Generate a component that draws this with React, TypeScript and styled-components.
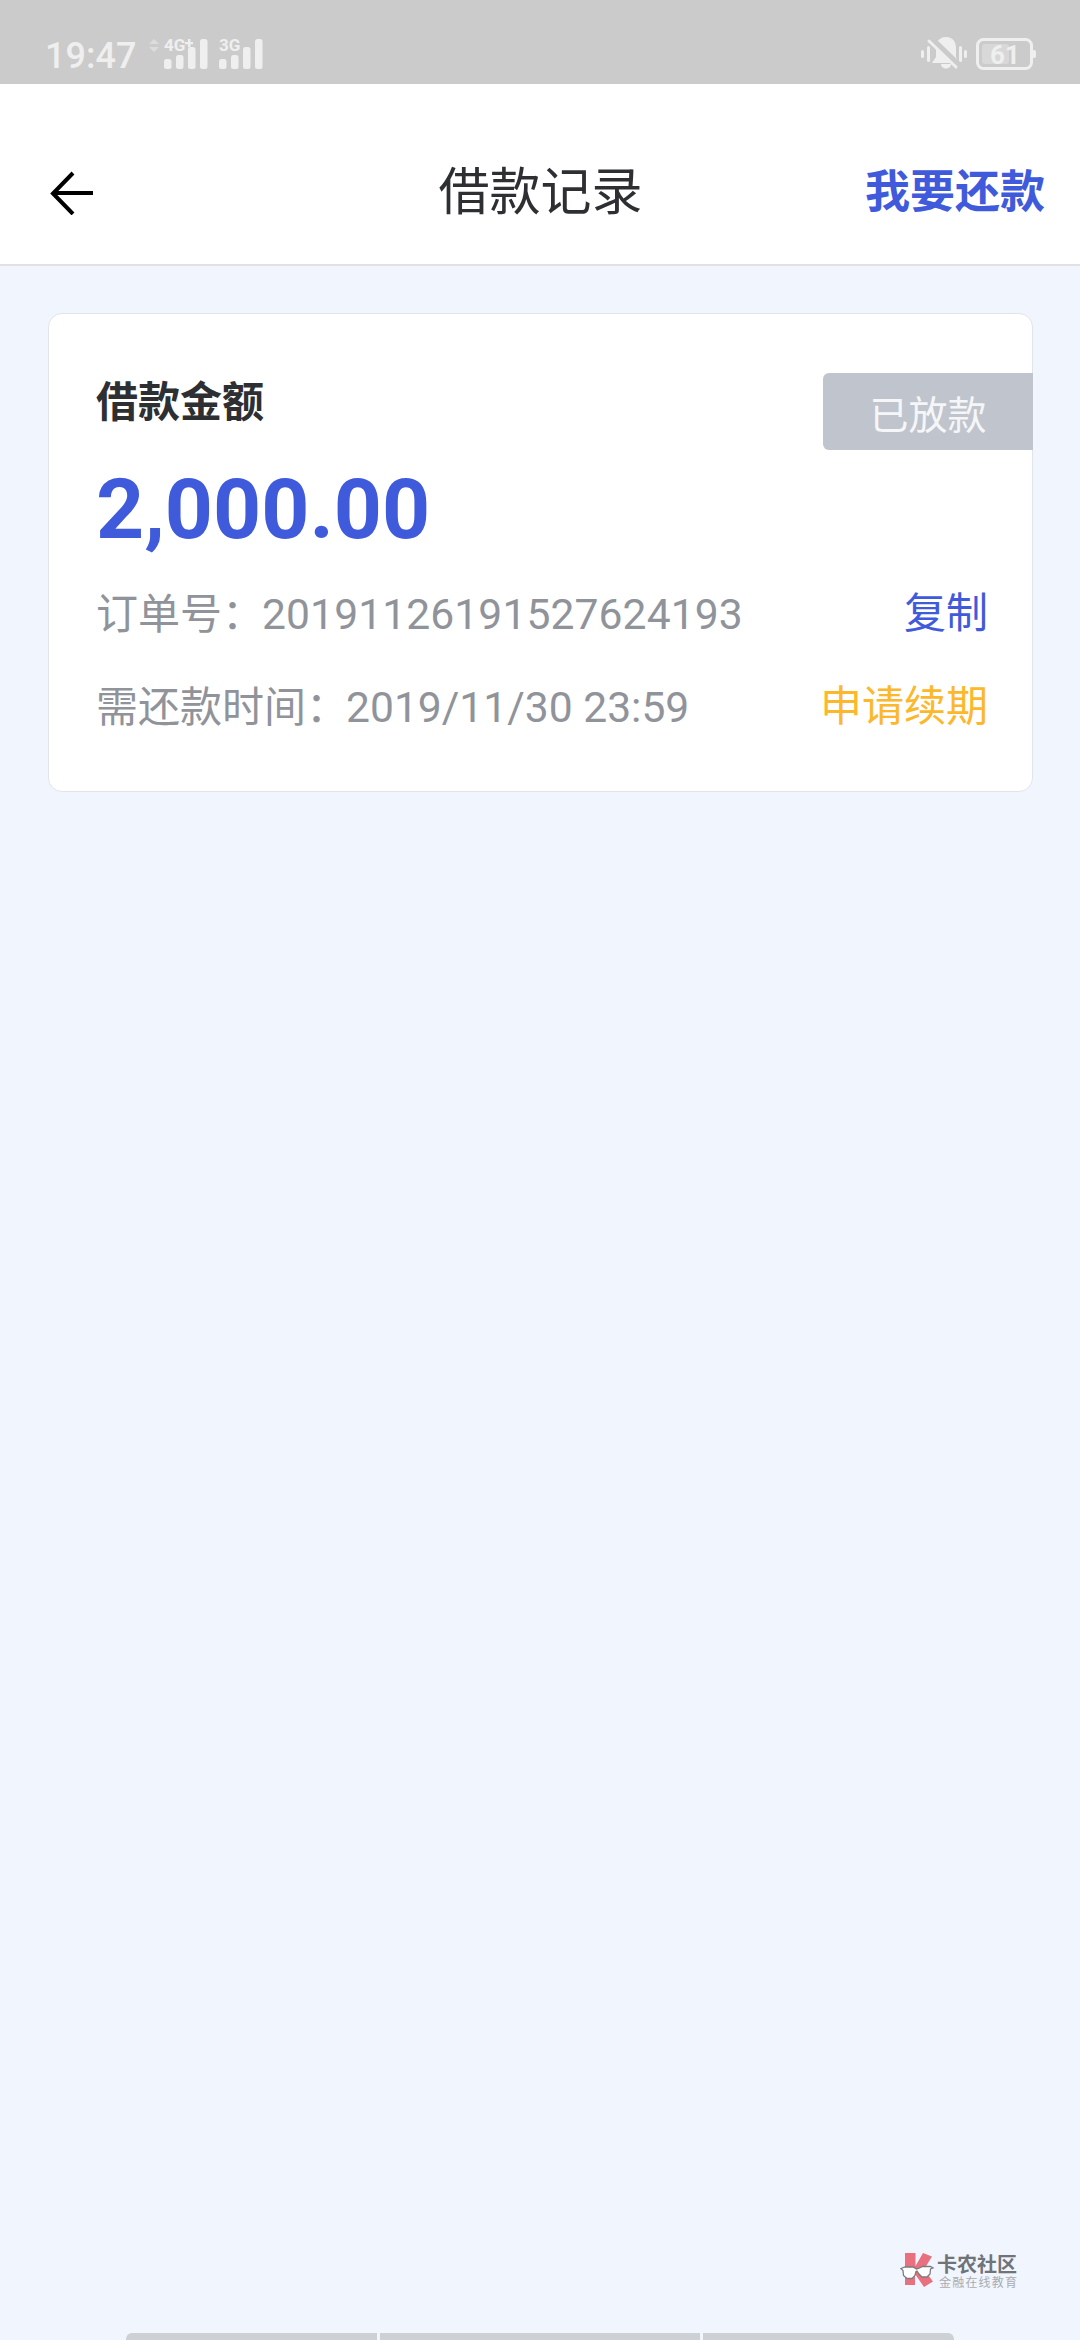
import styled, { createGlobalStyle } from 'styled-components';

const GlobalStyle = createGlobalStyle`
  html, body {
    margin: 0;
    padding: 0;
    background: #f1f5fd;
  }
  * {
    box-sizing: border-box;
  }
`;

const FONT = `Roboto, "Noto Sans CJK SC", sans-serif`;

const Page = styled.div`
  position: relative;
  display: flex;
  flex-direction: column;
  width: 1080px;
  height: 2340px;
  overflow: hidden;
  background: #f1f5fd;
  font-family: ${FONT};
`;

// ---------------------------------------------
// status bar
// ---------------------------------------------
const StatusBar = styled.div`
  display: flex;
  align-items: flex-start;
  height: 84px;
  padding: 37px 44px 0 45px;
  background: #cbcbcb;
  color: #efefef;
`;

const Time = styled.span`
  width: 104px;
  margin-top: 1px;
  font-size: 36px;
  font-weight: 500;
  line-height: 36px;
`;

const StatusRight = styled.div`
  display: flex;
  align-items: center;
  gap: 9px;
  margin-left: auto;
`;

const Signals = styled.div`
  display: flex;
  gap: 11px;
  margin-top: -8px;
`;

const DataArrows = styled.svg`
  width: 10px;
  height: 13px;
  margin: 10px -6px 0 0;
  fill: #dcdcdc;
`;

const Main = styled.main`
  flex: 1;
  padding: 47px 47px 0 48px;
`;

// ---------------------------------------------
// header
// ---------------------------------------------
const Header = styled.header`
  display: grid;
  grid-template-columns: 1fr auto 1fr;
  align-items: center;
  height: 182px;
  padding: 37px 35px 0 36px;
  background: #fff;
  border-bottom: 2px solid #e0e1e4;
`;

const BackButton = styled.button`
  display: flex;
  width: 46px;
  height: 44px;
  margin-left: 14px;
  padding: 0;
  background: none;
  border: 0;
`;

const Title = styled.h1`
  margin: 0;
  font-size: 51px;
  font-weight: 400;
  line-height: 60px;
  color: #2e2f33;
`;

const HeaderAction = styled.a`
  justify-self: end;
  font-size: 45px;
  font-weight: 700;
  line-height: 60px;
  color: #3f5bdc;
`;

// ---------------------------------------------
// card
// ---------------------------------------------
const Card = styled.section`
  position: relative;
  height: 479px;
  padding: 64px 44px 0 47px;
  background: #fff;
  border: 1.5px solid #e2e4ea;
  border-radius: 14px;
`;

const CardLabel = styled.h2`
  margin: 0;
  font-size: 42px;
  font-weight: 700;
  line-height: 50px;
  color: #2e2f33;
`;

const Badge = styled.span`
  position: absolute;
  top: 59px;
  right: -1px;
  display: flex;
  align-items: center;
  justify-content: center;
  width: 210px;
  height: 77px;
  background: #c0c4cc;
  border-radius: 6px 0 0 6px;
  font-size: 39px;
  color: #f5f6f8;
`;

const Amount = styled.div`
  margin-top: 32px;
  font-size: 84px;
  font-weight: 700;
  line-height: 100px;
  color: #3f5bdc;
`;

const InfoRow = styled.div<{ $gap: number }>`
  display: flex;
  align-items: center;
  justify-content: space-between;
  height: 50px;
  margin-top: ${(p) => p.$gap}px;
  font-size: 42px;
  line-height: 50px;
  color: #90939a;
`;

const InfoValue = styled.span<{ $spacing?: number }>`
  margin-left: -2px;
  font-size: 42.6px;
  letter-spacing: ${(p) => p.$spacing ?? 0}px;
`;

const RowAction = styled.a<{ $color: string }>`
  color: ${(p) => p.$color};
`;

// ---------------------------------------------
// watermark + nav hint
// ---------------------------------------------
const Watermark = styled.div`
  position: absolute;
  left: 900px;
  top: 2253px;
  display: flex;
  align-items: flex-start;
  gap: 1px;
`;

const WatermarkText = styled.div`
  display: flex;
  flex-direction: column;
`;

const WatermarkName = styled.span`
  font-size: 20px;
  font-weight: 700;
  line-height: 24px;
  color: #707378;
`;

const WatermarkSlogan = styled.span`
  margin-left: 2px;
  font-size: 12px;
  line-height: 13px;
  letter-spacing: 1.2px;
  color: #a9acb2;
`;

const GestureBar = styled.div`
  display: flex;
  gap: 3px;
  width: 828px;
  height: 7px;
  margin: 0 0 0 126px;
`;

const GestureSegment = styled.div<{ $grow: number }>`
  flex: ${(p) => p.$grow} 0 0;
  background: #cdd0d5;

  &:first-child {
    border-radius: 6px 0 0 0;
  }
  &:last-child {
    border-radius: 0 6px 0 0;
  }
`;

function SignalIcon({ label, plus }: { label: string; plus?: boolean }) {
  return (
    <svg width={44} height={40} viewBox="0 -8 44 40" fill="#efefef">
      <text x="0" y="14" fontFamily="Roboto, sans-serif" fontSize="17" fontWeight="700">
        {label}
      </text>
      {plus && <path d="M24 2h2.4v3H29v2.2h-2.6v3H24v-3h-3V5h3z" />}
      {[22, 18, 10, 2].map((top, i) => (
        <rect key={i} x={i * 12} y={top} width="7.5" height={32 - top} rx="2.5" />
      ))}
    </svg>
  );
}

function App() {
  return (
    <Page>
      <GlobalStyle />
      <StatusBar>
        <Time>19:47</Time>
        <Signals>
          <DataArrows viewBox="0 0 10 13">
            <path d="M5 0l5 5H0zM0 8h10l-5 5z" />
          </DataArrows>
          <SignalIcon label="4G" plus />
          <SignalIcon label="3G" />
        </Signals>
        <StatusRight>
          <svg width="46" height="34" viewBox="0 0 46 34" fill="#efefef">
            <rect x="0" y="13" width="3" height="8" rx="1.5" />
            <rect x="6" y="9" width="3" height="16" rx="1.5" />
            <rect x="38" y="9" width="3" height="16" rx="1.5" />
            <rect x="43" y="13" width="3" height="8" rx="1.5" />
            <path d="M25 0c7 0 10 5 10 11v9l3 6H11l4-6v-9c0-6 3-11 10-11z" />
            <path d="M20 27h10c0 6-10 6-10 0z" />
            <path d="M8 4l28 27" stroke="#cbcbcb" strokeWidth="7" transform="translate(2 -2)" />
            <path d="M8 4l27 26" stroke="#efefef" strokeWidth="3" strokeLinecap="round" />
          </svg>
          <svg width="60" height="32" viewBox="0 0 60 32">
            <rect x="1.5" y="1.5" width="54" height="29" rx="6" fill="none" stroke="#efefef" strokeWidth="3" />
            <rect x="6" y="6" width="27" height="20" rx="3" fill="#d8d8d8" />
            <path d="M57 12h1a2 2 0 0 1 2 2v4a2 2 0 0 1-2 2h-1z" fill="#efefef" />
            <text x="14" y="26" fontFamily="Roboto, sans-serif" fontSize="26" fontWeight="700" fill="#efefef">
              61
            </text>
          </svg>
        </StatusRight>
      </StatusBar>

      <Header>
        <BackButton aria-label="back">
          <svg width="46" height="44" viewBox="0 0 46 44" fill="none" stroke="#000" strokeWidth="4">
            <path d="M43 22H4" />
            <path d="M23 2L3 22.5 23 43" />
          </svg>
        </BackButton>
        <Title>借款记录</Title>
        <HeaderAction>我要还款</HeaderAction>
      </Header>

      <Main>
        <Card>
          <CardLabel>借款金额</CardLabel>
          <Badge>已放款</Badge>
          <Amount>2,000.00</Amount>
          <InfoRow $gap={29}>
            <span>
              订单号：<InfoValue $spacing={0.1}>20191126191527624193</InfoValue>
            </span>
            <RowAction $color="#3f5bdc">复制</RowAction>
          </InfoRow>
          <InfoRow $gap={43}>
            <span>
              需还款时间：<InfoValue>2019/11/30 23:59</InfoValue>
            </span>
            <RowAction $color="#fdb72b">申请续期</RowAction>
          </InfoRow>
        </Card>
      </Main>

      <Watermark>
        <svg width="36" height="35" viewBox="0 0 36 35">
          <path d="M5 0h10.500v13L23 0l9 3.500-8 13 9 12-9 5.500-9-13v11H5z" fill="#e9717f" />
          <path d="M1 15.500l4-1.500h8l3.500 2 2-.5 4-2h8l2.500 1.500-2.500 1-.5 5-3 3h-5l-3-3-2-3-1 .5-1 4-3 3H7l-3.500-3-.5-5z" fill="#fff" stroke="#7a7c80" strokeWidth="1.3" />
        </svg>
        <WatermarkText>
          <WatermarkName>卡农社区</WatermarkName>
          <WatermarkSlogan>金融在线教育</WatermarkSlogan>
        </WatermarkText>
      </Watermark>

      <GestureBar>
        <GestureSegment $grow={251} />
        <GestureSegment $grow={320} />
        <GestureSegment $grow={251} />
      </GestureBar>
    </Page>
  );
}

export default App;
